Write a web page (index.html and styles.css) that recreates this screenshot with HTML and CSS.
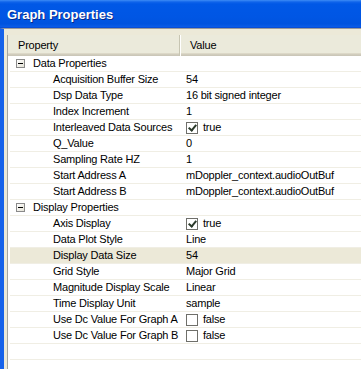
FILE: index.html
```html
<!DOCTYPE html>
<html lang="en">
<head>
    <meta charset="UTF-8">
    <title>Graph Properties</title>
    <link rel="stylesheet" href="styles.css">
</head>
<body>
    <div class="window">
        <div class="titlebar">
            <span class="title">Graph Properties</span>
        </div>
        <div class="frame">
            <div class="grid">
                <div class="header">
                    <div class="hcell hname">Property</div>
                    <div class="hcell hvalue">Value</div>
                </div>

                <div class="row group">
                    <div class="name"><span class="toggle"></span>Data Properties</div>
                    <div class="value"></div>
                </div>
                <div class="row">
                    <div class="name">Acquisition Buffer Size</div>
                    <div class="value">54</div>
                </div>
                <div class="row">
                    <div class="name">Dsp Data Type</div>
                    <div class="value">16 bit signed integer</div>
                </div>
                <div class="row">
                    <div class="name">Index Increment</div>
                    <div class="value">1</div>
                </div>
                <div class="row">
                    <div class="name">Interleaved Data Sources</div>
                    <div class="value"><span class="check checked"></span>true</div>
                </div>
                <div class="row">
                    <div class="name">Q_Value</div>
                    <div class="value">0</div>
                </div>
                <div class="row">
                    <div class="name">Sampling Rate HZ</div>
                    <div class="value">1</div>
                </div>
                <div class="row">
                    <div class="name">Start Address A</div>
                    <div class="value">mDoppler_context.audioOutBuf</div>
                </div>
                <div class="row">
                    <div class="name">Start Address B</div>
                    <div class="value">mDoppler_context.audioOutBuf</div>
                </div>

                <div class="row group">
                    <div class="name"><span class="toggle"></span>Display Properties</div>
                    <div class="value"></div>
                </div>
                <div class="row">
                    <div class="name">Axis Display</div>
                    <div class="value"><span class="check checked"></span>true</div>
                </div>
                <div class="row">
                    <div class="name">Data Plot Style</div>
                    <div class="value">Line</div>
                </div>
                <div class="row selected">
                    <div class="name">Display Data Size</div>
                    <div class="value">54</div>
                </div>
                <div class="row">
                    <div class="name">Grid Style</div>
                    <div class="value">Major Grid</div>
                </div>
                <div class="row">
                    <div class="name">Magnitude Display Scale</div>
                    <div class="value">Linear</div>
                </div>
                <div class="row">
                    <div class="name">Time Display Unit</div>
                    <div class="value">sample</div>
                </div>
                <div class="row">
                    <div class="name">Use Dc Value For Graph A</div>
                    <div class="value"><span class="check"></span>false</div>
                </div>
                <div class="row">
                    <div class="name">Use Dc Value For Graph B</div>
                    <div class="value"><span class="check"></span>false</div>
                </div>

                <div class="row empty"></div>
                <div class="row empty"></div>
            </div>
        </div>
    </div>
</body>
</html>
```

FILE: styles.css
```css
* {
    margin: 0;
    padding: 0;
    box-sizing: border-box;
}

body {
    background-color: #ffffff;
    font-family: 'Liberation Sans', Arial, sans-serif;
    font-size: 11px;
    letter-spacing: -0.2px;
    color: #000000;
}

.window {
    width: 361px;
    height: 369px;
    overflow: hidden;
    display: flex;
    flex-direction: column;
}

.titlebar {
    height: 28px;
    flex-shrink: 0;
    display: flex;
    align-items: center;
    padding-left: 7px;
    padding-top: 1px;
    background: linear-gradient(to bottom, #3d8cf5 0, #0f64ea 2px, #0058e6 4px, #0056e4 60%, #0053df 85%, #0a5ce8 96%, #0843c8 100%);
}

.title {
    color: #ffffff;
    font-weight: bold;
    font-size: 13px;
    letter-spacing: 0;
    text-shadow: 1px 1px 0 #0a2a8a;
}

.frame {
    flex: 1;
    display: flex;
    padding: 6px 0 0 3px;
    background-color: #ece9d8;
    border-top: 1px solid #9a9a9a;
    border-left: 4px solid #1662ea;
}

.grid {
    flex: 1;
    background-color: #ffffff;
    border-left: 1px solid #a5a5a0;
}

.header {
    display: flex;
    height: 21px;
    background: linear-gradient(to bottom, #ebeadb 0, #ebeadb 18px, #e2decd 18px, #d6d2c2 19px, #cbc7b8 20px);
}

.hcell {
    display: flex;
    align-items: center;
    padding-bottom: 1px;
}

.hname {
    width: 172px;
    padding-left: 10px;
    border-right: 1px solid #c7c5b2;
}

.hvalue {
    flex: 1;
    padding-left: 9px;
    border-left: 1px solid #ffffff;
}

.row {
    display: flex;
    height: 16px;
    margin-left: 2px;
    border-bottom: 1px solid #f0eee4;
    line-height: 15px;
    white-space: nowrap;
}

.row.selected {
    background-color: #ece9d8;
}

.name {
    width: 170px;
    padding-left: 43px;
    display: flex;
    align-items: center;
}

.group .name {
    padding-left: 6px;
}

.value {
    flex: 1;
    padding-left: 6px;
    display: flex;
    align-items: center;
}

.toggle {
    position: relative;
    width: 9px;
    height: 9px;
    margin-right: 8px;
    border: 1px solid #8a8a8a;
    background: linear-gradient(to bottom right, #ffffff, #e4e2d6);
}

.toggle::after {
    content: '';
    position: absolute;
    left: 1px;
    top: 3px;
    width: 5px;
    height: 1px;
    background-color: #000000;
}

.check {
    position: relative;
    width: 12px;
    height: 12px;
    margin-right: 5px;
    border: 1px solid #6f6f6a;
    background-color: #ffffff;
}

.check.checked::after {
    content: '';
    position: absolute;
    left: 3px;
    top: 0px;
    width: 3px;
    height: 6px;
    border-right: 2px solid #2b3a2b;
    border-bottom: 2px solid #2b3a2b;
    transform: rotate(40deg);
}
```
